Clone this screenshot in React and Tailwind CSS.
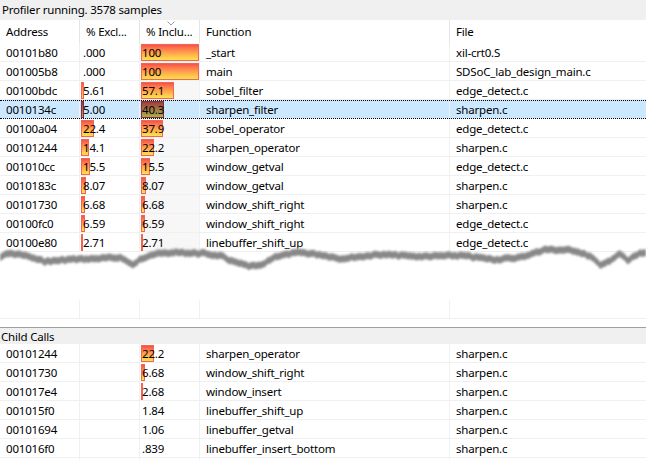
import React from "react";

const mainRows = [
  ["00101b80", ".000", 0, "100", 100, "_start", "xil-crt0.S"],
  ["001005b8", ".000", 0, "100", 100, "main", "SDSoC_lab_design_main.c"],
  ["00100bdc", "5.61", 5.61, "57.1", 57.1, "sobel_filter", "edge_detect.c"],
  ["0010134c", "5.00", 5.0, "40.3", 40.3, "sharpen_filter", "sharpen.c"],
  ["00100a04", "22.4", 22.4, "37.9", 37.9, "sobel_operator", "edge_detect.c"],
  ["00101244", "14.1", 14.1, "22.2", 22.2, "sharpen_operator", "sharpen.c"],
  ["001010cc", "15.5", 15.5, "15.5", 15.5, "window_getval", "edge_detect.c"],
  ["0010183c", "8.07", 8.07, "8.07", 8.07, "window_getval", "sharpen.c"],
  ["00101730", "6.68", 6.68, "6.68", 6.68, "window_shift_right", "sharpen.c"],
  ["00100fc0", "6.59", 6.59, "6.59", 6.59, "window_shift_right", "edge_detect.c"],
  ["00100e80", "2.71", 2.71, "2.71", 2.71, "linebuffer_shift_up", "edge_detect.c"],
];

const childRows = [
  ["00101244", "", 0, "22.2", 22.2, "sharpen_operator", "sharpen.c"],
  ["00101730", "", 0, "6.68", 6.68, "window_shift_right", "sharpen.c"],
  ["001017e4", "", 0, "2.68", 2.68, "window_insert", "sharpen.c"],
  ["001015f0", "", 0, "1.84", 1.84, "linebuffer_shift_up", "sharpen.c"],
  ["00101694", "", 0, "1.06", 1.06, "linebuffer_getval", "sharpen.c"],
  ["001016f0", "", 0, ".839", 0.839, "linebuffer_insert_bottom", "sharpen.c"],
];

const cols = "grid grid-cols-[80px_60px_60px_250px_196px]";

// percent bar behind the number
function Bar({ value, selected }) {
  const w = Math.round(value * 0.58);
  if (w < 2) return null;
  return (
    <div
      className={
        "absolute left-[1px] top-[1px] h-[17px] border " +
        (selected
          ? "bg-gradient-to-b from-[#9b3a3c] to-[#a2b04a] border-[#8c2a3a]"
          : "bg-gradient-to-b from-[#f7504a] to-[#ffe24a] border-[#f26552]")
      }
      style={{ width: w }}
    />
  );
}

function Row({ r, selected, sortedBg }) {
  const [addr, excl, exclV, incl, inclV, fn, file] = r;
  return (
    <div className={cols + " relative h-[19px] " + (selected ? "bg-[#cce8ff]" : "")}>
      <div className="border-r border-b border-[#f0f0f0] pl-[6px] pt-[1px] leading-[17px]">{addr}</div>
      <div className="relative border-r border-b border-[#f0f0f0] pl-[3px] pt-[1px] leading-[17px]">
        {exclV > 0 && <Bar value={exclV} selected={selected} />}
        <span className="relative">{excl}</span>
      </div>
      <div
        className={
          "relative border-r border-b border-[#f0f0f0] pl-[2px] pt-[1px] leading-[17px] " +
          (sortedBg && !selected ? "bg-[#f7f7f7]" : "")
        }
      >
        <Bar value={inclV} selected={selected} />
        <span className="relative">{incl}</span>
      </div>
      <div className="border-r border-b border-[#f0f0f0] pl-[6px] pt-[1px] leading-[17px]">{fn}</div>
      <div className="border-b border-[#f0f0f0] pl-[6px] pt-[1px] leading-[17px]">{file}</div>
      {selected && (
        <div className="absolute inset-x-0 top-0 bottom-0 border-y border-dotted border-black" />
      )}
    </div>
  );
}

// torn paper edge between the two panes
function TornEdge() {
  const keys = [
    [0, 254], [8, 250], [22, 251], [34, 255], [45, 258], [70, 256], [100, 255],
    [120, 254], [128, 258], [133, 262], [140, 256], [150, 251], [175, 249],
    [205, 250], [222, 253], [235, 259], [250, 263], [262, 262], [275, 253],
    [300, 249], [320, 251], [340, 255], [380, 251], [420, 253], [460, 252],
    [495, 256], [520, 254], [545, 246], [575, 247], [590, 253], [600, 261],
    [610, 258], [620, 250], [628, 257], [640, 250], [646, 250],
  ];
  let seed = 7;
  const rnd = () => {
    seed = (seed * 9301 + 49297) % 233280;
    return seed / 233280;
  };
  const pts = [];
  for (let i = 0; i < keys.length - 1; i++) {
    const [x0, y0] = keys[i];
    const [x1, y1] = keys[i + 1];
    for (let x = x0; x < x1; x += 2) {
      const t = (x - x0) / (x1 - x0);
      pts.push([x, y0 + (y1 - y0) * t + (rnd() - 0.5) * 2.2 - 240]);
    }
  }
  pts.push([646, 10]);
  const edge = pts.map((p) => p[0] + "," + p[1].toFixed(1)).join(" ");
  const lower = pts
    .slice()
    .reverse()
    .map((p) => p[0] + "," + (p[1] + 7).toFixed(1))
    .join(" ");
  return (
    <svg className="absolute left-0 top-[240px]" width="646" height="45" viewBox="0 0 646 45">
      <defs>
        <filter id="sh" x="-5%" y="-50%" width="110%" height="200%">
          <feGaussianBlur stdDeviation="1" />
        </filter>
      </defs>
      <polygon points={edge + " 646,45 0,45"} fill="#ffffff" />
      <polygon points={edge + " " + lower} fill="#888888" filter="url(#sh)" />
    </svg>
  );
}

export default function App() {
  return (
    <div className="relative w-[646px] h-[460px] overflow-hidden bg-white text-[11.5px] tracking-[-0.2px] leading-[18px] text-black font-['Segoe_UI','Noto_Sans',sans-serif]">
      <div className="h-[20px] bg-[#f0f0f0] pl-[2px] leading-[20px]">
        Profiler running. 3578 samples
      </div>

      <div className={cols + " relative h-[23px] leading-[24px]"}>
        <div className="border-r border-[#e5e5e5] pl-[6px]">Address</div>
        <div className="border-r border-[#e5e5e5] pl-[6px]">% Excl...</div>
        <div className="relative border-r border-[#e5e5e5] pl-[6px]">
          <svg className="absolute left-[27px] top-[1px]" width="8" height="5" viewBox="0 0 8 5">
            <path d="M0.5 0.5 L4 4 L7.5 0.5" fill="none" stroke="#9a9a9a" strokeWidth="1" />
          </svg>
          % Inclu...
        </div>
        <div className="border-r border-[#e5e5e5] pl-[6px]">Function</div>
        <div className="pl-[6px]">File</div>
      </div>

      {mainRows.map((r, i) => (
        <Row key={i} r={r} selected={i === 3} sortedBg />
      ))}

      <div className="h-[48px]" />
      <div className={cols + " h-[19px]"}>
        <div className="border-r border-b border-[#f0f0f0]" />
        <div className="border-r border-b border-[#f0f0f0]" />
        <div className="border-r border-b border-[#f0f0f0]" />
        <div className="border-r border-b border-[#f0f0f0]" />
        <div className="border-b border-[#f0f0f0]" />
      </div>
      <div className="h-[8px]" />

      <div className="h-[17px] border-t border-[#a0a0a0] bg-[#f0f0f0] pl-[1px] leading-[17px]">
        Child Calls
      </div>
      {childRows.map((r, i) => (
        <Row key={i} r={r} />
      ))}
      <div className={cols + " h-[19px]"}>
        <div className="border-r border-[#f0f0f0]" />
        <div className="border-r border-[#f0f0f0]" />
        <div className="border-r border-[#f0f0f0]" />
        <div className="border-r border-[#f0f0f0]" />
        <div />
      </div>

      <TornEdge />
    </div>
  );
}
